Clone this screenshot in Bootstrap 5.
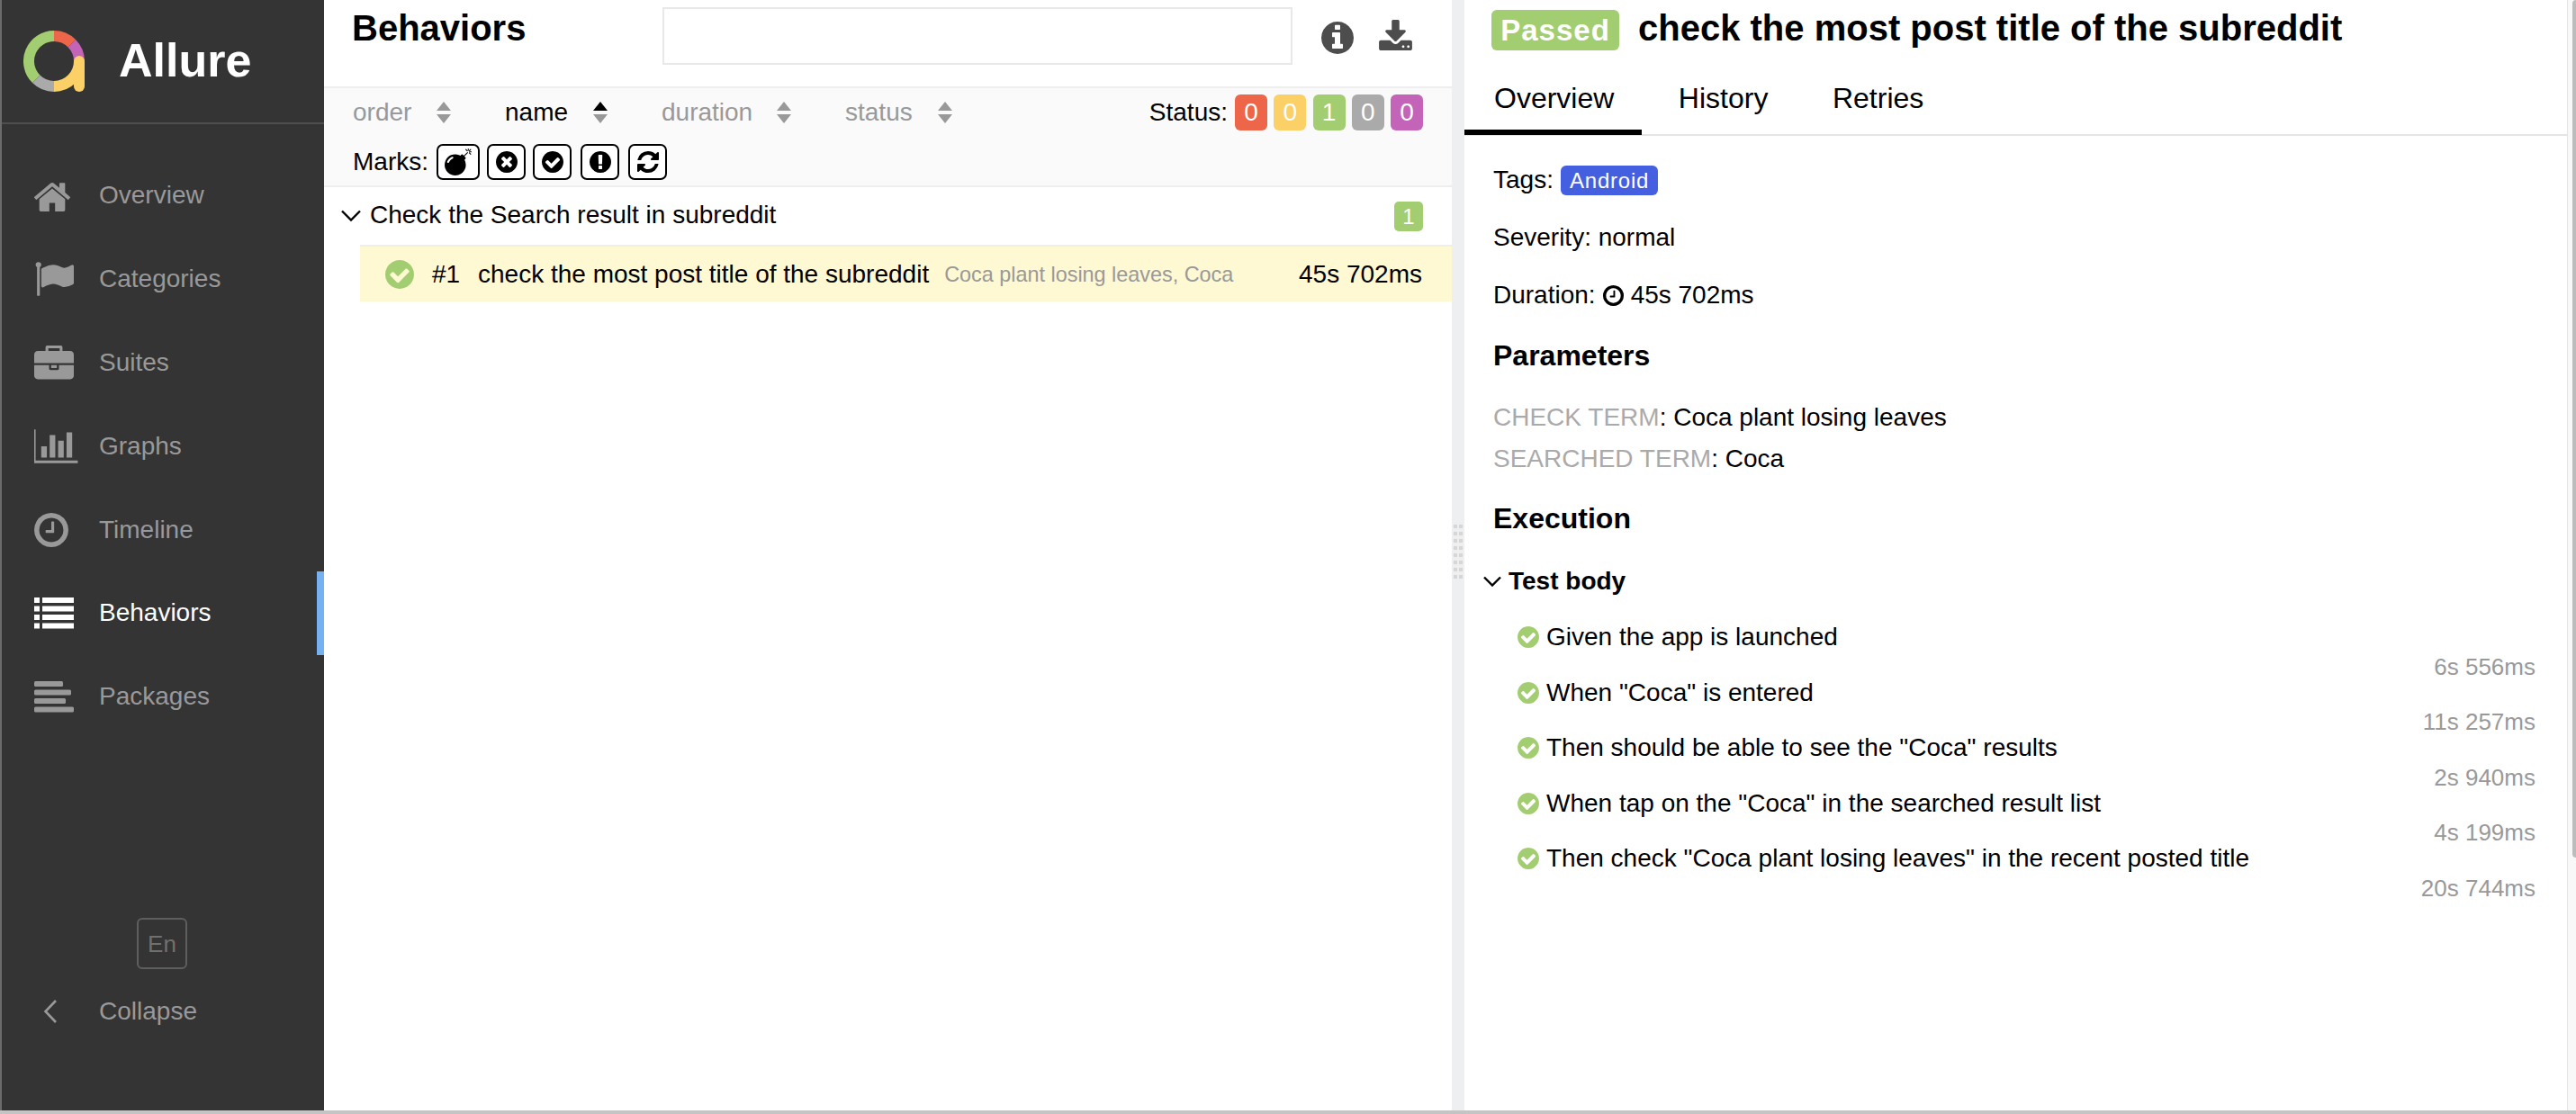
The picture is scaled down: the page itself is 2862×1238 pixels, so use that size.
<!DOCTYPE html>
<html lang="en">
<head>
    <meta charset="UTF-8">
    <meta name="viewport" content="width=device-width, initial-scale=1">
    <title>Allure Report</title>
    <link href="https://cdn.jsdelivr.net/npm/bootstrap@5.3.0/dist/css/bootstrap.min.css" rel="stylesheet">
    <script src="https://cdn.jsdelivr.net/npm/bootstrap@5.3.0/dist/js/bootstrap.bundle.min.js"></script>
    <style>
        html, body { height: 100%; overflow: hidden; }
        body {
            font-family: "Liberation Sans", Arial, sans-serif;
            font-size: 28px;
            line-height: 34px;
            color: #000;
        }
        .app-shell { height: 1238px; border-bottom: 4px solid #c4c4c4; }

        /* sidebar */
        .side-bar { width: 360px; background: #343434; border-left: 2px solid #6b6b6b; }
        .side-brand { height: 138px; border-bottom: 2px solid #4f4f4f; padding-left: 24px; }
        .side-brand-name { font-size: 52px; font-weight: 700; color: #fff; margin: -3px 0 0 38px; line-height: 1; }
        .side-menu { padding-top: 33px; }
        .side-link { height: 92.8px; color: #999; text-decoration: none; position: relative; }
        .side-link.is-on { color: #fff; }
        .side-link.is-on::after {
            content: ""; position: absolute; right: 0; top: 0; bottom: 0; width: 8px; background: #75b1f0;
        }
        .side-ico-wrap { width: 108px; flex: none; padding-left: 36px; display: flex; align-items: center; }
        .side-foot { padding-bottom: 80px; }
        .lang-box {
            width: 56px; height: 57px; margin-left: 150px; border: 2px solid #5e5e5e; border-radius: 6px; color: #707070;
            font-size: 26px;
        }
        .side-collapse { height: 60px; margin-top: 17px; color: #999; }

        /* list pane */
        .list-pane { width: 1253px; flex: none; }
        .list-head { height: 98px; border-bottom: 2px solid #eee; padding-left: 31px; }
        .list-title { font-size: 40px; font-weight: 700; line-height: 46px; margin: 8px 0 0; width: 345px; }
        .search-box { width: 700px; height: 64px; margin-top: 8px; border: 2px solid #e8e8e8; border-radius: 0; flex: none; }
        .head-tools { height: 84px; }
        .head-ico { fill: #4d4d4d; }
        .head-info { margin-left: 32px; }
        .head-save { margin: -6px 0 0 28px; }
        .list-tools { height: 110px; background: #fafafa; border-bottom: 2px solid #eee; padding: 0 32px; }
        .sort-label { color: #999; margin-left: 60px; }
        .sort-label.is-on { color: #000; }
        .sort-order { margin-left: 0; width: 93px; }
        .sort-name { width: 98px; }
        .sort-duration { width: 128px; }
        .sort-status { width: 103px; }
        .sort-cell { height: 40px; margin-top: 7px; }
        .count-chip {
            width: 36px; height: 40px; border-radius: 6px; color: #fff; font-size: 28px; line-height: 40px; text-align: center;
        }
        .count-chip + .count-chip { margin-left: 7.25px; }
        .is-failed { background: #ed664a; }
        .is-broken { background: #fbd066; }
        .is-passed { background: #a3cd71; }
        .is-skipped { background: #aaa; }
        .is-unknown { background: #c364b9; }
        .marks-row { margin-top: 15px; }
        .mark-btn {
            width: 43px; height: 40px; padding: 0; border: 2px solid #000; border-radius: 7px; background: #fff;
            margin-left: 8px;
        }
        .mark-bomb { width: 48px; margin-left: 9px; }
        .mark-wide { margin-left: 10px; }
        .group-row { height: 64px; padding: 0 32px 0 19px; }
        .group-text { margin-left: 10px; margin-top: -2px; }
        .group-chip {
            width: 32px; height: 33px; border-radius: 5px; background: #a3cd71; color: #fff; font-size: 24px;
            line-height: 33px; text-align: center; margin-top: 1px;
        }
        .case-row {
            height: 63px; margin-left: 40px; background: #fef8d3; border-top: 2px solid #eee; padding: 0 33px 0 28px;
        }
        .case-num { width: 51px; margin-left: 20px; }
        .case-params { font-size: 23.4px; color: #999; margin-left: 17px; }

        /* divider */
        .pane-split { width: 14px; flex: none; background: #eeeff1; }
        .split-dots {
            width: 10px; height: 62px; margin-left: 2px; margin-top: 583px;
            background:
                repeating-linear-gradient(to right, transparent 0 4px, #eeeff1 4px 6px),
                repeating-linear-gradient(to bottom, #d6d6d6 0 4px, transparent 4px 8px);
        }

        /* result pane */
        .detail-pane { border-right: 1px solid #e5e5e5; min-width: 0; }
        .detail-head { height: 151px; border-bottom: 2px solid #e5e5e5; }
        .detail-title-row { padding: 11px 0 0 30px; height: 88px; }
        .status-tag {
            height: 45px; width: 142px; border-radius: 6px; background: #a3cd71; color: #fff; font-size: 33px; font-weight: 700;
            line-height: 45px; text-align: center; letter-spacing: 1px;
        }
        .detail-title { font-size: 40px; font-weight: 700; line-height: 40px; margin: 0 0 0 21px; }
        .detail-tabs { height: 62px; }
        .detail-tabs .nav-item { margin-right: 7.5px; }
        .detail-tabs .nav-link {
            color: #000; font-size: 32px; line-height: 38px; padding: 2px 31px 0 33px; height: 62px;
            border-bottom: 6px solid transparent; border-radius: 0;
        }
        .detail-tabs .nav-link.active { border-bottom-color: #000; }
        .detail-body { padding: 0 35px 0 32px; }
        .tag-chip {
            background: #4460e1; color: #fff; border-radius: 6px; font-size: 24px; height: 33px; line-height: 33px;
            padding: 0 10px; margin-left: 8px; letter-spacing: .8px;
        }
        .info-line { height: 34px; }
        .info-tags { margin-top: 32px; }
        .info-severity { margin-top: 30px; }
        .info-duration { margin-top: 30px; }
        .section-name { font-size: 32px; font-weight: 700; line-height: 38px; margin: 0; }
        .section-params { margin-top: 31px; }
        .param-first { margin-top: 33px; }
        .param-next { margin-top: 12px; }
        .section-exec { margin-top: 30px; }
        .param-name { color: #aaa; }
        .step-head { font-weight: 700; margin: 34px 0 28px -11px; }
        .step-row { height: 61.5px; padding-left: 27px; }
        .step-time { font-size: 26px; line-height: 24px; color: #999; }

        .scroll-track { width: 9px; flex: none; background: #f8f8f8; }
        .scroll-thumb { width: 4px; height: 953px; margin-left: auto; background: #bcbcbc; border-radius: 4px 0 0 4px; }
    </style>
</head>
<body>
    <svg class="d-none">
        <symbol id="ico-check" viewBox="128 128 1536 1536"><path d="M1412 734q0-28-18-46l-91-90q-19-19-45-19t-45 19l-408 407-226-226q-19-19-45-19t-45 19l-91 90q-18 18-18 46 0 27 18 45l362 362q19 19 45 19 27 0 46-19l543-543q18-18 18-45zm252 162q0 209-103 385.5t-279.5 279.5-385.5 103-385.5-103-279.5-279.5-103-385.5 103-385.5 279.5-279.5 385.5-103 385.5 103 279.5 279.5 103 385.5z"/></symbol>
        <symbol id="ico-clock" viewBox="128 128 1536 1536"><path d="M1024 544v448q0 14-9 23t-23 9h-320q-14 0-23-9t-9-23v-64q0-14 9-23t23-9h224v-352q0-14 9-23t23-9h64q14 0 23 9t9 23zm416 352q0-148-73-273t-198-198-273-73-273 73-198 198-73 273 73 273 198 198 273 73 273-73 198-198 73-273zm224 0q0 209-103 385.5t-279.5 279.5-385.5 103-385.5-103-279.5-279.5-103-385.5 103-385.5 279.5-279.5 385.5-103 385.5 103 279.5 279.5 103 385.5z"/></symbol>
        <symbol id="ico-sort" viewBox="0 0 16 24"><path d="M8 0l8 10H0z"/><path d="M8 24l8-10H0z"/></symbol>
    </svg>
    <div class="app-shell d-flex">
        <!-- sidebar -->
        <aside class="side-bar d-flex flex-column flex-shrink-0">
            <div class="side-brand d-flex align-items-center">
                <svg width="68" height="68" viewBox="0 0 68 68" fill="none" stroke-width="12">
                    <path d="M34 6A28 28 0 0 1 53.8 14.2" stroke="#ed664a"/>
                    <path d="M53.8 14.2A28 28 0 0 1 62 34" stroke="#c364b9"/>
                    <path d="M62 34A28 28 0 0 1 34 62" stroke="#fbd066"/>
                    <path d="M62 34V62" stroke="#fbd066" stroke-linecap="round"/>
                    <path d="M34 62A28 28 0 0 1 14.2 53.8" stroke="#aaa"/>
                    <path d="M14.2 53.8A28 28 0 0 1 34 6" stroke="#a3cd71"/>
                </svg>
                <span class="side-brand-name">Allure</span>
            </div>
            <nav class="side-menu nav flex-column flex-grow-1">
                <a class="side-link d-flex align-items-center" href="#">
                    <span class="side-ico-wrap"><svg width="40" height="35" viewBox="96 128 1600 1408" fill="currentColor"><path d="M1472 992v480q0 26-19 45t-45 19h-384v-384h-256v384h-384q-26 0-45-19t-19-45v-480q0-1 .5-3t.5-3l575-474 575 474q1 2 1 6zm223-69l-62 74q-8 9-21 11h-3q-13 0-21-7l-692-577-692 577q-12 8-24 7-13-2-21-11l-62-74q-8-10-7-23.5t11-21.5l719-599q32-26 76-26t76 26l244 204v-195q0-14 9-23t23-9h192q14 0 23 9t9 23v408l219 182q10 8 11 21.5t-7 23.5z"/></svg></span>
                    Overview
                </a>
                <a class="side-link d-flex align-items-center" href="#">
                    <span class="side-ico-wrap"><svg width="44" height="38" viewBox="0 128 1792 1536" fill="currentColor"><path d="M320 256q0 72-64 110v1266q0 13-9.5 22.5t-22.5 9.5h-64q-13 0-22.5-9.5t-9.5-22.5v-1266q-64-38-64-110 0-53 37.5-90.5t90.5-37.5 90.5 37.5 37.5 90.5zm1472 64v763q0 25-12.5 38.5t-39.5 27.5q-215 116-369 116-61 0-123.5-22t-108.5-48-115.5-48-142.5-22q-192 0-464 146-17 9-33 9-26 0-45-19t-19-45v-742q0-32 31-55 21-14 79-43 236-120 421-120 107 0 200 29t219 88q38 19 88 19 54 0 117.5-21t110-47 88-47 54.5-21q26 0 45 19t19 45z"/></svg></span>
                    Categories
                </a>
                <a class="side-link d-flex align-items-center" href="#">
                    <span class="side-ico-wrap"><svg width="44" height="38" viewBox="0 32 1792 1504" fill="currentColor"><path d="M640 256h512v-128h-512v128zm1152 640v480q0 66-47 113t-113 47h-1472q-66 0-113-47t-47-113v-480h672v160q0 26 19 45t45 19h320q26 0 45-19t19-45v-160h672zm-768 0v128h-256v-128h256zm768-480v384h-1792v-384q0-66 47-113t113-47h352v-160q0-40 28-68t68-28h576q40 0 68 28t28 68v160h352q66 0 113 47t47 113z"/></svg></span>
                    Suites
                </a>
                <a class="side-link d-flex align-items-center" href="#">
                    <span class="side-ico-wrap"><svg width="50" height="38" viewBox="0 128 2048 1536" fill="currentColor"><path d="M576 896v512h-256v-512h256zm384-512v1024h-256v-1024h256zm1024 1152v128h-2048v-1536h128v1408h1920zm-640-896v768h-256v-768h256zm384-384v1152h-256v-1152h256z"/></svg></span>
                    Graphs
                </a>
                <a class="side-link d-flex align-items-center" href="#">
                    <span class="side-ico-wrap"><svg width="38" height="38" fill="currentColor"><use href="#ico-clock"/></svg></span>
                    Timeline
                </a>
                <a class="side-link is-on d-flex align-items-center" href="#">
                    <span class="side-ico-wrap"><svg width="44" height="35" viewBox="0 0 44 35" fill="currentColor">
                        <rect y="0" width="6" height="6"/><rect x="9" y="0" width="35" height="6"/>
                        <rect y="9.5" width="6" height="6"/><rect x="9" y="9.5" width="35" height="6"/>
                        <rect y="19" width="6" height="6"/><rect x="9" y="19" width="35" height="6"/>
                        <rect y="28.5" width="6" height="6"/><rect x="9" y="28.5" width="35" height="6"/>
                    </svg></span>
                    Behaviors
                </a>
                <a class="side-link d-flex align-items-center" href="#">
                    <span class="side-ico-wrap"><svg width="44" height="35" viewBox="0 0 44 35" fill="currentColor">
                        <rect y="0" width="32" height="6" rx="1.5"/><rect y="9.5" width="41" height="6" rx="1.5"/>
                        <rect y="19" width="35" height="6" rx="1.5"/><rect y="28.5" width="44" height="6" rx="1.5"/>
                    </svg></span>
                    Packages
                </a>
            </nav>
            <div class="side-foot">
                <div class="lang-box d-flex align-items-center justify-content-center">En</div>
                <div class="side-collapse d-flex align-items-center">
                    <span class="side-ico-wrap"><svg width="30" height="26" viewBox="0 0 30 26" fill="none" stroke="currentColor" stroke-width="2.6"><path d="M24 1L12.5 13 24 25"/></svg></span>
                    Collapse
                </div>
            </div>
        </aside>

        <!-- list of behaviors -->
        <main class="list-pane d-flex flex-column">
            <div class="list-head d-flex">
                <h2 class="list-title">Behaviors</h2>
                <input class="form-control search-box" type="text">
                <div class="head-tools d-flex align-items-center">
                    <svg class="head-ico head-info" width="36" height="36" viewBox="128 128 1536 1536"><path d="M1152 1376v-160q0-14-9-23t-23-9h-96v-512q0-14-9-23t-23-9h-320q-14 0-23 9t-9 23v160q0 14 9 23t23 9h96v320h-96q-14 0-23 9t-9 23v160q0 14 9 23t23 9h448q14 0 23-9t9-23zm-128-896v-160q0-14-9-23t-23-9h-192q-14 0-23 9t-9 23v160q0 14 9 23t23 9h192q14 0 23-9t9-23zm640 416q0 209-103 385.5t-279.5 279.5-385.5 103-385.5-103-279.5-279.5-103-385.5 103-385.5 279.5-279.5 385.5-103 385.5 103 279.5 279.5 103 385.5z"/></svg>
                    <svg class="head-ico head-save" width="37" height="34" viewBox="64 0 1664 1536"><path d="M1344 1344q0-26-19-45t-45-19-45 19-19 45 19 45 45 19 45-19 19-45zm256 0q0-26-19-45t-45-19-45 19-19 45 19 45 45 19 45-19 19-45zm128-224v320q0 40-28 68t-68 28h-1472q-40 0-68-28t-28-68v-320q0-40 28-68t68-28h465l135 136q58 56 136 56t136-56l136-136h464q40 0 68 28t28 68zm-325-569q17 41-14 70l-448 448q-18 19-45 19t-45-19l-448-448q-31-29-14-70 17-39 59-39h256v-448q0-26 19-45t45-19h256q26 0 45 19t19 45v448h256q42 0 59 39z"/></svg>
                </div>
            </div>
            <div class="list-tools">
                <div class="d-flex justify-content-between">
                    <div class="d-flex sort-cell align-items-center">
                        <span class="sort-label sort-order">order</span>
                        <svg width="16" height="24" fill="#999"><use href="#ico-sort"/></svg>
                        <span class="sort-label sort-name is-on">name</span>
                        <svg width="16" height="24" viewBox="0 0 16 24"><path d="M8 0l8 10H0z" fill="#000"/><path d="M8 24l8-10H0z" fill="#999"/></svg>
                        <span class="sort-label sort-duration">duration</span>
                        <svg width="16" height="24" fill="#999"><use href="#ico-sort"/></svg>
                        <span class="sort-label sort-status">status</span>
                        <svg width="16" height="24" fill="#999"><use href="#ico-sort"/></svg>
                    </div>
                    <div class="d-flex align-items-center sort-cell">
                        <span class="me-2">Status:</span>
                        <span class="count-chip is-failed">0</span>
                        <span class="count-chip is-broken">0</span>
                        <span class="count-chip is-passed">1</span>
                        <span class="count-chip is-skipped">0</span>
                        <span class="count-chip is-unknown">0</span>
                    </div>
                </div>
                <div class="marks-row d-flex align-items-center">
                    <span>Marks:</span>
                    <button class="btn mark-btn mark-bomb" type="button"><svg width="30" height="30" viewBox="0 0 1792 1792"><path d="M571 589q-10-25-34-35t-49 0q-108 44-191 127t-127 191q-10 25 0 49t35 34q13 5 24 5 42 0 60-40 34-84 98.5-148.5t148.5-98.5q25-11 35-35t0-49zm942-356l46 46-244 243 68 68q19 19 19 45.5t-19 45.5l-64 64q89 161 89 343 0 143-55.5 273.5t-150 225-225 150-273.5 55.5-273.5-55.5-225-150-150-225-55.5-273.5 55.5-273.5 150-225 225-150 273.5-55.5q182 0 343 89l64-64q19-19 45.5-19t45.5 19l68 68zm8-56q-10 10-22 10-13 0-23-10l-91-90q-9-10-9-23t9-23q10-9 23-9t23 9l90 91q10 9 10 22.5t-10 22.5zm230 230q-11 9-23 9t-23-9l-90-91q-10-9-10-22.5t10-22.5q9-10 22.5-10t22.5 10l91 90q9 10 9 23t-9 23zm41-183q0 14-9 23t-23 9h-96q-14 0-23-9t-9-23 9-23 23-9h96q14 0 23 9t9 23zm-192-192v96q0 14-9 23t-23 9-23-9-9-23v-96q0-14 9-23t23-9 23 9 9 23zm151 55l-91 90q-10 10-22 10-13 0-23-10-10-9-10-22.5t10-22.5l90-91q10-9 23-9t23 9q9 10 9 23t-9 23z"/></svg></button>
                    <button class="btn mark-btn" type="button"><svg width="24" height="24" viewBox="128 128 1536 1536"><path d="M1277 1122q0-26-19-45l-181-181 181-181q19-19 19-45 0-27-19-46l-90-90q-19-19-46-19-26 0-45 19l-181 181-181-181q-19-19-45-19-27 0-46 19l-90 90q-19 19-19 46 0 26 19 45l181 181-181 181q-19 19-19 45 0 27 19 46l90 90q19 19 46 19 26 0 45-19l181-181 181 181q19 19 45 19 27 0 46-19l90-90q19-19 19-46zm387-226q0 209-103 385.5t-279.5 279.5-385.5 103-385.5-103-279.5-279.5-103-385.5 103-385.5 279.5-279.5 385.5-103 385.5 103 279.5 279.5 103 385.5z"/></svg></button>
                    <button class="btn mark-btn" type="button"><svg width="24" height="24"><use href="#ico-check"/></svg></button>
                    <button class="btn mark-btn mark-wide" type="button"><svg width="24" height="24" viewBox="128 128 1536 1536"><path d="M896 128q209 0 385.5 103t279.5 279.5 103 385.5-103 385.5-279.5 279.5-385.5 103-385.5-103-279.5-279.5-103-385.5 103-385.5 279.5-279.5 385.5-103zm128 1247v-190q0-14-9-23.5t-22-9.5h-192q-13 0-23 10t-10 23v190q0 13 10 23t23 10h192q13 0 22-9.5t9-23.5zm-2-344l18-621q0-12-10-18-10-8-24-8h-220q-14 0-24 8-10 6-10 18l17 621q0 10 10 17.5t24 7.5h185q14 0 23.5-7.5t10.5-17.5z"/></svg></button>
                    <button class="btn mark-btn mark-wide" type="button"><svg width="24" height="24" viewBox="128 128 1536 1536"><path d="M1639 1056q0 5-1 7-64 268-268 434.5t-478 166.5q-146 0-282.5-55t-243.5-157l-129 129q-19 19-45 19t-45-19-19-45v-448q0-26 19-45t45-19h448q26 0 45 19t19 45-19 45l-137 137q71 66 161 102t187 36q134 0 250-65t186-179q11-17 53-117 8-23 30-23h192q13 0 22.5 9.5t9.5 22.5zm25-800v448q0 26-19 45t-45 19h-448q-26 0-45-19t-19-45 19-45l138-138q-148-137-349-137-134 0-250 65t-186 179q-11 17-53 117-8 23-30 23h-199q-13 0-22.5-9.5t-9.5-22.5v-7q65-268 270-434.5t480-166.5q146 0 284 55.5t245 156.5l130-129q19-19 45-19t45 19 19 45z"/></svg></button>
                </div>
            </div>
            <div class="group-row d-flex align-items-center justify-content-between">
                <div class="d-flex align-items-center">
                    <svg width="22" height="14" viewBox="0 0 22 14" fill="none" stroke="#000" stroke-width="2.4"><path d="M1 1.5l10 10 10-10"/></svg>
                    <span class="group-text">Check the Search result in subreddit</span>
                </div>
                <span class="group-chip">1</span>
            </div>
            <div class="case-row d-flex align-items-center">
                <svg width="32" height="32" fill="#a3cd71"><use href="#ico-check"/></svg>
                <span class="case-num">#1</span>
                <span>check the most post title of the subreddit</span>
                <span class="case-params">Coca plant losing leaves, Coca</span>
                <span class="ms-auto">45s 702ms</span>
            </div>
        </main>

        <div class="pane-split"><div class="split-dots"></div></div>

        <!-- selected test result -->
        <section class="detail-pane flex-grow-1">
            <div class="detail-head">
                <div class="detail-title-row d-flex align-items-start">
                    <span class="status-tag">Passed</span>
                    <h2 class="detail-title">check the most post title of the subreddit</h2>
                </div>
                <ul class="nav detail-tabs">
                    <li class="nav-item"><a class="nav-link active" href="#">Overview</a></li>
                    <li class="nav-item"><a class="nav-link" href="#">History</a></li>
                    <li class="nav-item"><a class="nav-link" href="#">Retries</a></li>
                </ul>
            </div>
            <div class="detail-body">
                <div class="info-line info-tags d-flex align-items-center">Tags: <span class="badge tag-chip fw-normal">Android</span></div>
                <div class="info-line info-severity">Severity: normal</div>
                <div class="info-line info-duration d-flex align-items-center">Duration:
                    <svg class="mx-2" width="23" height="23" fill="#000"><use href="#ico-clock"/></svg>
                    45s 702ms</div>
                <h3 class="section-name section-params">Parameters</h3>
                <div class="param-first"><span class="param-name">CHECK TERM</span>: Coca plant losing leaves</div>
                <div class="param-next"><span class="param-name">SEARCHED TERM</span>: Coca</div>
                <h3 class="section-name section-exec">Execution</h3>
                <div class="step-head d-flex align-items-center">
                    <svg class="me-2" width="20" height="12" viewBox="0 0 20 12" fill="none" stroke="#000" stroke-width="2.4"><path d="M1 1.5l9 9 9-9"/></svg>
                    Test body
                </div>
                <div class="step-row d-flex justify-content-between">
                    <div class="d-flex align-items-center align-self-start"><svg class="me-2" width="24" height="24" fill="#a3cd71"><use href="#ico-check"/></svg>Given the app is launched</div>
                    <span class="step-time align-self-end">6s 556ms</span>
                </div>
                <div class="step-row d-flex justify-content-between">
                    <div class="d-flex align-items-center align-self-start"><svg class="me-2" width="24" height="24" fill="#a3cd71"><use href="#ico-check"/></svg>When "Coca" is entered</div>
                    <span class="step-time align-self-end">11s 257ms</span>
                </div>
                <div class="step-row d-flex justify-content-between">
                    <div class="d-flex align-items-center align-self-start"><svg class="me-2" width="24" height="24" fill="#a3cd71"><use href="#ico-check"/></svg>Then should be able to see the "Coca" results</div>
                    <span class="step-time align-self-end">2s 940ms</span>
                </div>
                <div class="step-row d-flex justify-content-between">
                    <div class="d-flex align-items-center align-self-start"><svg class="me-2" width="24" height="24" fill="#a3cd71"><use href="#ico-check"/></svg>When tap on the "Coca" in the searched result list</div>
                    <span class="step-time align-self-end">4s 199ms</span>
                </div>
                <div class="step-row d-flex justify-content-between">
                    <div class="d-flex align-items-center align-self-start"><svg class="me-2" width="24" height="24" fill="#a3cd71"><use href="#ico-check"/></svg>Then check "Coca plant losing leaves" in the recent posted title</div>
                    <span class="step-time align-self-end">20s 744ms</span>
                </div>
            </div>
        </section>
        <div class="scroll-track"><div class="scroll-thumb"></div></div>
    </div>
</body>
</html>
